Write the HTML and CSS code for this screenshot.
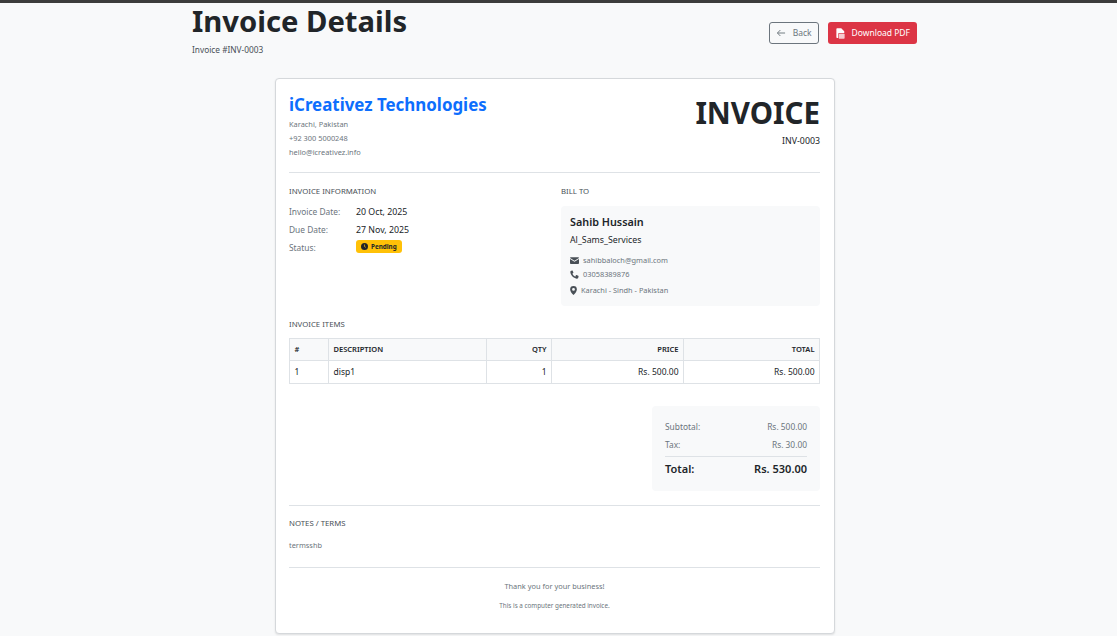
FILE: index.html
```html
<!DOCTYPE html>
<html>
<head>
<meta charset="UTF-8">
<title>Invoice Details</title>
<link rel="stylesheet" href="styles.css">
</head>
<body>
<div class="topbar"></div>
<main class="page">
  <header class="page-head">
    <div>
      <h1>Invoice Details</h1>
      <p class="page-sub">Invoice #INV-0003</p>
    </div>
    <div class="actions">
      <a class="btn btn-back">
        <svg class="ico" viewBox="0 0 16 16" width="10" height="10"><path d="M14.500 8H2.500M7 3.200 2.200 8 7 12.800" fill="none" stroke="currentColor" stroke-width="1.500"/></svg>
        Back
      </a>
      <a class="btn btn-pdf">
        <svg class="ico" viewBox="0 0 12 14" width="9" height="11"><path d="M1.500 0H7l4 4v2.500H3V13H1.500A1 1 0 0 1 .5 12V1a1 1 0 0 1 1-1Z" fill="currentColor"/><path d="M3.800 7.500h7.700v5.500a1 1 0 0 1-1 1H3.800Z" fill="currentColor" opacity=".75"/></svg>
        Download PDF
      </a>
    </div>
  </header>

  <section class="card">
    <div class="inv-head">
      <div>
        <h2 class="company">iCreativez Technologies</h2>
        <p class="muted-line">Karachi, Pakistan</p>
        <p class="muted-line">+92 300 5000248</p>
        <p class="muted-line">hello@icreativez.info</p>
      </div>
      <div class="inv-title">
        <h2>INVOICE</h2>
        <p>INV-0003</p>
      </div>
    </div>

    <div class="info-row">
      <div class="info-col">
        <h6>INVOICE INFORMATION</h6>
        <div class="info-grid">
          <span class="lbl">Invoice Date:</span><span>20 Oct, 2025</span>
          <span class="lbl">Due Date:</span><span>27 Nov, 2025</span>
          <span class="lbl">Status:</span>
          <span><b class="badge"><svg viewBox="0 0 16 16" width="7" height="7"><circle cx="8" cy="8" r="8" fill="currentColor"/><path d="M8 3.500V8l3 2" fill="none" stroke="#ffc107" stroke-width="1.600"/></svg> Pending</b></span>
        </div>
      </div>
      <div class="info-col">
        <h6>BILL TO</h6>
        <div class="bill-box">
          <div class="bill-name">Sahib Hussain</div>
          <div class="bill-org">Al_Sams_Services</div>
          <div class="bill-line">
            <svg viewBox="0 0 16 12" width="9" height="7"><path d="M0 1.500A1.500 1.500 0 0 1 1.500 0h13A1.500 1.500 0 0 1 16 1.500L8 6.500ZM0 3.400V10.500A1.500 1.500 0 0 0 1.500 12h13a1.500 1.500 0 0 0 1.500-1.500V3.400L8 8.400Z" fill="#495057"/></svg>
            sahibbaloch@gmail.com
          </div>
          <div class="bill-line">
            <svg viewBox="0 0 16 16" width="9" height="9"><path d="M4.600.8 2 1.500C.9 2 .4 3 .6 4.200c.9 5.600 5.600 10.300 11.200 11.200 1.200.2 2.200-.3 2.700-1.400l.7-2.600a1 1 0 0 0-.6-1.200l-3-1.200a1 1 0 0 0-1.100.3L9.300 11.800C7.200 10.800 5.200 8.800 4.200 6.700l1.500-1.200a1 1 0 0 0 .3-1.100L4.800 1.400A1 1 0 0 0 4.600.8Z" fill="#495057"/></svg>
            03058389876
          </div>
          <div class="bill-line bill-loc">
            <svg viewBox="0 0 12 16" width="7" height="9"><path fill-rule="evenodd" d="M6 0a6 6 0 0 1 6 6c0 3.500-4 8-6 10-2-2-6-6.500-6-10a6 6 0 0 1 6-6Zm0 3.500a2.500 2.500 0 1 0 0 5 2.500 2.500 0 0 0 0-5Z" fill="#495057"/></svg>
            Karachi - Sindh - Pakistan
          </div>
        </div>
      </div>
    </div>

    <h6 class="items-title">INVOICE ITEMS</h6>
    <table class="items">
      <thead>
        <tr><th class="c-num">#</th><th class="c-desc">DESCRIPTION</th><th class="c-qty num">QTY</th><th class="c-price num">PRICE</th><th class="num">TOTAL</th></tr>
      </thead>
      <tbody>
        <tr><td>1</td><td>disp1</td><td class="num">1</td><td class="num">Rs. 500.00</td><td class="num">Rs. 500.00</td></tr>
      </tbody>
    </table>

    <div class="totals-wrap">
      <div class="totals">
        <div class="t-row"><span>Subtotal:</span><span>Rs. 500.00</span></div>
        <div class="t-row"><span>Tax:</span><span>Rs. 30.00</span></div>
        <div class="t-row t-grand"><span>Total:</span><span>Rs. 530.00</span></div>
      </div>
    </div>

    <div class="notes">
      <h6>NOTES / TERMS</h6>
      <p>termsshb</p>
    </div>

    <footer class="inv-foot">
      <p class="thanks">Thank you for your business!</p>
      <p class="generated">This is a computer generated invoice.</p>
    </footer>
  </section>
</main>
</body>
</html>
```

FILE: styles.css
```css
html, body {
  margin: 0;
  padding: 0;
}
body {
  background: #f8f9fa;
  color: #212529;
  font-family: "Noto Sans", sans-serif;
  font-size: 8.800px;
  line-height: 1.5;
  height: 636px;
  overflow: hidden;
}
p, h1, h2, h6 { margin: 0; }
.topbar {
  height: 3px;
  background: #3c3c3c;
}
.page {
  width: 725px;
  margin-left: 192px;
}

/* Page header */
.page-head {
  display: flex;
  justify-content: space-between;
  align-items: flex-start;
  height: 75px;
}
h1 {
  font-size: 29.200px;
  font-weight: 700;
  line-height: 36px;
}
.page-sub {
  margin-top: 5px;
  color: #495057;
  font-size: 8.300px;
}
.actions {
  display: flex;
  gap: 9px;
  margin-top: 19px;
}
.btn {
  display: flex;
  align-items: center;
  gap: 6px;
  height: 22px;
  box-sizing: border-box;
  border-radius: 3px;
  padding: 0 7px;
  font-size: 8.500px;
}
.btn-back {
  border: 1px solid #6c757d;
  color: #6c757d;
  padding: 0 6px;
  gap: 7px;
}
.btn-pdf {
  background: #dc3545;
  color: white;
  padding: 0 7px 0 8px;
  gap: 7px;
}

/* Card */
.card {
  width: 560px;
  height: 556px;
  box-sizing: border-box;
  margin-left: 83px;
  padding: 14px 14px 14px 13px;
  background: white;
  border: 1px solid #d5d8db;
  border-radius: 4px;
  box-shadow: 0 1px 2px rgba(0,0,0,0.1);
}
.inv-head {
  display: flex;
  justify-content: space-between;
  height: 79px;
  border-bottom: 1px solid #dee2e6;
}
.company {
  color: #0d6efd;
  font-size: 16.900px;
  font-weight: 700;
  line-height: 23px;
}
.muted-line {
  color: #6c757d;
  font-size: 7.400px;
  line-height: 14px;
}
.company + .muted-line { margin-top: 1px; }
.inv-title { text-align: right; }
.inv-title h2 {
  margin-top: 1px;
  font-size: 29.500px;
  font-weight: 700;
  line-height: 38px;
}
.inv-title p {
  margin-top: 3px;
  font-size: 8.800px;
}

.info-row {
  display: flex;
  margin-top: 12px;
  height: 133px;
}
.info-col { flex: 0 0 272px; }
.info-col + .info-col { flex: 0 0 259px; }
h6 {
  color: #495057;
  font-size: 7.800px;
  font-weight: 400;
  line-height: 12px;
}
.info-grid {
  display: grid;
  grid-template-columns: 67px 1fr;
  grid-auto-rows: 18px;
  margin-top: 7px;
}
.info-grid span { line-height: 16px; }
.lbl {
  color: #6c757d;
  font-size: 8.400px;
}
.badge {
  display: inline-flex;
  align-items: center;
  gap: 3px;
  height: 13px;
  padding: 0 5px;
  background: #ffc107;
  border-radius: 3px;
  font-size: 6.300px;
  font-weight: 700;
  vertical-align: top;
}
.bill-box {
  margin-top: 9px;
  height: 100px;
  box-sizing: border-box;
  padding: 8px 9px;
  background: #f8f9fa;
  border-radius: 4px;
}
.bill-name {
  font-size: 10.800px;
  font-weight: 600;
  line-height: 16px;
}
.bill-org {
  margin-top: 2px;
  margin-bottom: 5px;
  line-height: 16px;
}
.bill-line {
  display: flex;
  align-items: center;
  gap: 4px;
  color: #6c757d;
  font-size: 7.400px;
  line-height: 14px;
}
.bill-loc { margin-top: 2px; }

/* Items */
.items {
  width: 531px;
  margin-top: 8px;
  border-collapse: collapse;
  font-size: 8.500px;
}
.items th, .items td {
  border: 1px solid #dee2e6;
  padding: 0 4.500px;
  text-align: left;
}
.items th {
  height: 21px;
  background: #f8f9fa;
  font-size: 7.500px;
  font-weight: 600;
}
.items td { height: 22px; }
.items .num { text-align: right; }
.c-num { width: 29px; }
.c-desc { width: 148px; }
.c-qty { width: 55px; }
.c-price { width: 122px; }

/* Totals */
.totals-wrap {
  display: flex;
  justify-content: flex-end;
  margin-top: 22px;
}
.totals {
  width: 168px;
  height: 85px;
  box-sizing: border-box;
  padding: 12px 13px;
  background: #f8f9fa;
  border-radius: 4px;
  color: #6c757d;
  font-size: 8.400px;
}
.t-row {
  display: flex;
  justify-content: space-between;
  line-height: 18px;
}
.t-grand {
  margin-top: 2px;
  padding-top: 3px;
  border-top: 1px solid #dee2e6;
  color: #212529;
  font-size: 11px;
  font-weight: 600;
  line-height: 18px;
}

/* Notes and footer */
.notes {
  margin-top: 14px;
  height: 62px;
  box-sizing: border-box;
  padding-top: 11px;
  border-top: 1px solid #dee2e6;
}
.notes p {
  margin-top: 10px;
  color: #6c757d;
  font-size: 7.400px;
  line-height: 12px;
}
.inv-foot {
  border-top: 1px solid #dee2e6;
  text-align: center;
  color: #6c757d;
}
.thanks {
  margin-top: 12px;
  font-size: 7.400px;
  line-height: 12px;
}
.generated {
  margin-top: 8px;
  font-size: 6.300px;
  line-height: 12px;
}
```
